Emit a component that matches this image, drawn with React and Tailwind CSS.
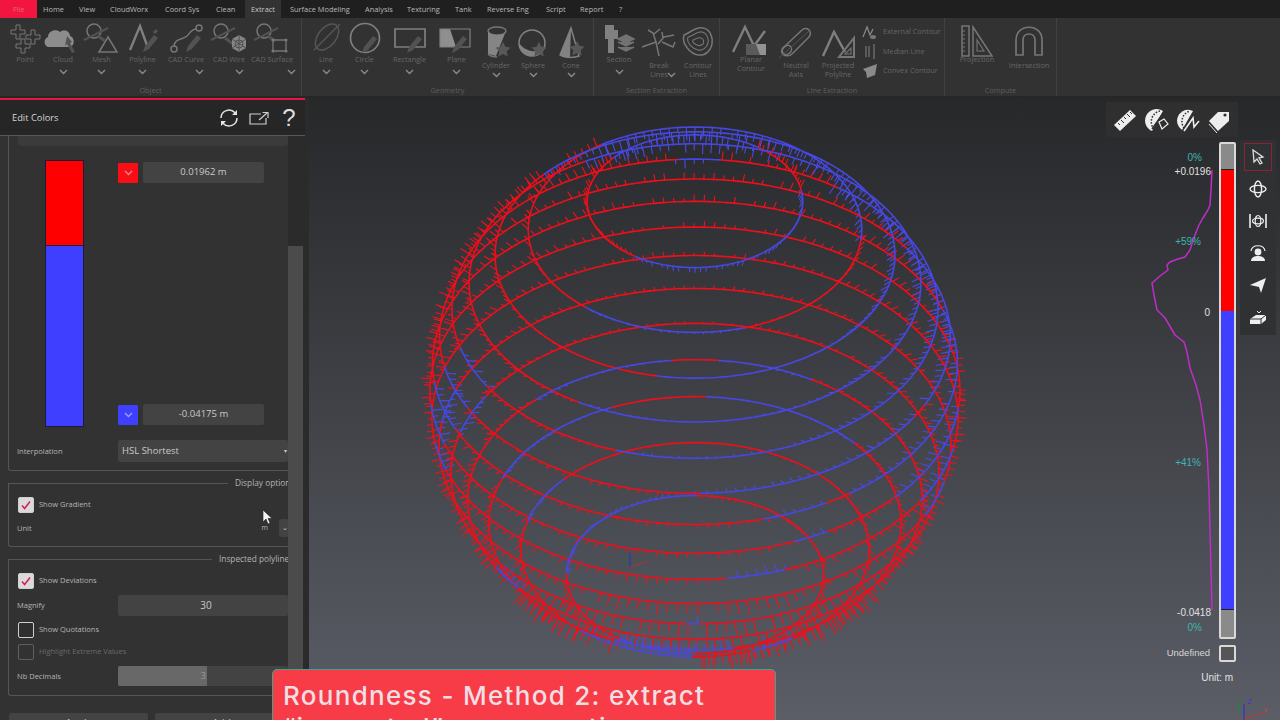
import React from "react";

const S = "#767676";
const D = "#525252";

const Pen = ({ x, y, c = D }) => (
  <path d={`M${x} ${y}l2-6 9-11 4 3-9 11z`} fill={c} stroke="none" />
);
const Star = ({ x, y, r = 8, c = "#585858" }) => {
  const p = [];
  for (let i = 0; i < 10; i++) {
    const a = -Math.PI / 2 + (i * Math.PI) / 5;
    const q = i % 2 ? r * 0.5 : r;
    p.push(`${(x + q * Math.cos(a)).toFixed(1)},${(y + q * Math.sin(a)).toFixed(1)}`);
  }
  return <polygon points={p.join(" ")} fill={c} stroke="none" />;
};
const Ic = ({ w = 40, h = 36, children }) => (
  <svg width={w} height={h} viewBox={`0 0 ${w} ${h}`} fill="none" stroke={S} strokeWidth="1.5" className="shrink-0">
    {children}
  </svg>
);
const Plus = ({ x, y }) => (
  <path d={`M${x - 2} ${y - 7}h4v5h5v4h-5v5h-4v-5h-5v-4h5z`} strokeWidth="1" />
);
const Lens = () => (
  <g>
    <circle cx="12" cy="9" r="7" />
    <path d="M2 18L26 6" stroke={D} strokeWidth="2" />
  </g>
);

const icons = {
  point: (
    <Ic>
      <Plus x={13} y={10} />
      <Plus x={28} y={15} />
      <Plus x={18} y={24} />
    </Ic>
  ),
  cloud: (
    <Ic>
      <path d="M5 25c-4-1-5-8 0-10 0-6 8-9 12-5 4-3 10-1 10 4 5 1 5 10 0 11z" fill="#8c8c8c" stroke="none" />
      <path d="M24 14l5 6-2 1 5 9-3 1-5-9-2 2z" fill={D} stroke="none" />
    </Ic>
  ),
  mesh: (
    <Ic>
      <Lens />
      <path d="M17 30l9-15 9 15z" />
      <path d="M16 14l7 5" stroke={D} strokeWidth="3" />
    </Ic>
  ),
  polyline: (
    <Ic>
      <path d="M7 28L17 4l8 22" strokeWidth="2.4" stroke="#7f7f7f" />
      <Pen x={20} y={30} />
      <path d="M31 11l3-3" stroke={D} strokeWidth="3" />
    </Ic>
  ),
  cadcurve: (
    <Ic>
      <circle cx="8" cy="27" r="3" />
      <circle cx="33" cy="6" r="3" />
      <path d="M8 24c1-8 9-6 13-10 3-3 4-7 10-7" />
      <Pen x={20} y={30} />
    </Ic>
  ),
  cadwire: (
    <Ic>
      <Lens />
      <path d="M16 16l8 6" stroke={D} strokeWidth="3" />
      <path d="M23 17l7-4 7 4v9l-7 4-7-4z" fill="#858585" stroke="none" />
      <path d="M23 17l14 9M37 17l-14 9M30 13v17" stroke="#444" strokeWidth=".8" />
      <circle cx="30" cy="22" r="4" stroke="#444" strokeWidth=".8" />
    </Ic>
  ),
  cadsurface: (
    <Ic>
      <Lens />
      <path d="M16 14l7 5" stroke={D} strokeWidth="3" />
      <path d="M21 18h13v11H21z" strokeWidth="1.3" />
      <g fill="#777" stroke="none">
        <circle cx="21" cy="18" r="1.6" />
        <circle cx="34" cy="18" r="1.6" />
        <circle cx="21" cy="29" r="1.6" />
        <circle cx="34" cy="29" r="1.6" />
      </g>
    </Ic>
  ),
  line: (
    <Ic>
      <ellipse cx="21" cy="15" rx="9" ry="15" transform="rotate(38 21 15)" stroke="#555" />
      <path d="M8 28L34 2" stroke="#555" />
    </Ic>
  ),
  circle: (
    <Ic>
      <circle cx="20" cy="16" r="14.500" strokeWidth="1.7" stroke="#7f7f7f" />
      <Pen x={17} y={31} />
    </Ic>
  ),
  rect: (
    <Ic>
      <path d="M5 7h30v18H5z" strokeWidth="1.7" stroke="#7f7f7f" />
      <Pen x={17} y={31} />
    </Ic>
  ),
  plane: (
    <Ic>
      <path d="M3 7h10l6 18H3z" fill="#8f8f8f" stroke="none" />
      <path d="M3 7h30v18H3z" strokeWidth="1.2" stroke="#808080" />
      <Pen x={15} y={31} />
    </Ic>
  ),
  cylinder: (
    <Ic h={42}>
      <ellipse cx="21" cy="9" rx="9" ry="4" />
      <path d="M12 9v23l8 2 10-25c0 3-5 4-9 4-5 0-9-2-9-4z" fill="#858585" stroke="none" />
      <path d="M12 32c2 2 6 3 9 3" />
      <Star x={27} y={28} r={8} />
    </Ic>
  ),
  sphere: (
    <Ic h={42}>
      <circle cx="19" cy="21" r="13" stroke="#828282" />
      <path d="M6 21c0 8 6 13 13 13 6 0 10-2 12-8-5 5-18 5-25-5z" fill="#828282" stroke="none" />
      <Star x={26} y={28} r={8} />
    </Ic>
  ),
  cone: (
    <Ic h={42}>
      <path d="M20 6L9 33c4 3 14 3 19 1z" stroke="#828282" />
      <path d="M20 6L9 33c3 2 7 3 10 3z" fill="#828282" stroke="none" />
      <Star x={26} y={27} r={8} />
    </Ic>
  ),
  section: (
    <Ic>
      <path d="M6 3h9v5h4v9h-4v14h-6V17H6z" fill="#808080" stroke="none" />
      <path d="M27 13l8 4-8 4-8-4zM19 20l8 4 8-4M19 25l8 4 8-4" fill="#727272" stroke="#727272" strokeWidth="1.5" />
    </Ic>
  ),
  breaks: (
    <Ic h={42}>
      <path d="M20 34l-3-14-14 5M17 20l-3-9-5-3M15 12l6-5M19 22l6-7 10-2M24 16l-1-6M23 20l11 5 2-5" />
    </Ic>
  ),
  contour: (
    <Ic h={42}>
      <path d="M6 13c6-2 12-9 19-7 7 1 10 9 9 16-1 6-6 12-14 11C13 32 3 22 6 13z" />
      <path d="M10 15c5-1 9-6 14-5 5 1 7 7 6 11-1 4-5 8-10 7-5-1-12-7-10-13z" strokeWidth="1.1" />
      <path d="M15 18c3-1 5-3 8-2 3 1 3 4 2 6-2 2-4 2-6 1-3-1-5-3-4-5z" strokeWidth="1.1" />
    </Ic>
  ),
  planar: (
    <Ic w={46}>
      <path d="M5 30L17 5l9 19 11-15" strokeWidth="2.4" stroke="#7f7f7f" />
      <path d="M18 22h14v11H18z" fill="#5a5a5a" stroke="none" />
      <path d="M28 22h10v11H32z" fill="#929292" stroke="none" />
    </Ic>
  ),
  neutral: (
    <Ic h={42}>
      <path d="M8 25L26 8c3-3 8-1 8 2 1 2 0 4-2 6L16 32c-3 3-8 2-10-1-1-2 0-5 2-6z" />
      <ellipse cx="11" cy="28" rx="4" ry="5" transform="rotate(45 11 28)" />
      <path d="M3 36L34 8" stroke="#555" strokeWidth="1" />
    </Ic>
  ),
  projected: (
    <Ic h={42}>
      <path d="M5 34L16 10l11 20" strokeWidth="2.4" stroke="#7f7f7f" />
      <path d="M36 16v19H21z" strokeWidth="2" />
      <path d="M33 26v6h-6z" strokeWidth="1.1" />
    </Ic>
  ),
  projection: (
    <Ic w={44} h={34}>
      <path d="M7 2h7v30H7z" />
      <path d="M7 7h3M7 11h3M7 15h3M7 19h3M7 23h3M7 27h3" strokeWidth="1" />
      <path d="M18 3l19 29H18z" />
      <path d="M22 16l7 11h-7z" strokeWidth="1.1" />
    </Ic>
  ),
  intersection: (
    <Ic w={44} h={40}>
      <path d="M9 31V16c0-17 26-17 26 0v15h-7V16c0-8-12-8-12 0v15z" strokeWidth="1.7" />
    </Ic>
  ),
};

const Chev = ({ color = "#8a8a8a" }) => (
  <svg width="9" height="6" viewBox="0 0 9 6" fill="none" stroke={color} strokeWidth="1.4" className="shrink-0">
    <path d="M1 1l3.5 3.5L8 1" />
  </svg>
);

const RibItem = ({ w, icon, label, chev, chevOff = 0, top = 4, chevMt = 5, inlineChev }) => (
  <div className="flex flex-col items-center shrink-0" style={{ width: w, paddingTop: top }}>
    {icons[icon]}
    <div className="text-[7.3px] leading-[9px] text-[#666] text-center whitespace-pre -mt-[3px]">{label}</div>
    {inlineChev && (
      <div className="-mt-[7px] ml-[24px]">
        <Chev />
      </div>
    )}
    {chev && (
      <div style={{ marginLeft: chevOff, marginTop: chevMt }}>
        <Chev />
      </div>
    )}
  </div>
);

const Group = ({ w, title, children, sep = true, pl = 0 }) => (
  <div className={`flex flex-col shrink-0 h-full ${sep ? "border-r border-[#414141]" : ""}`} style={{ width: w }}>
    <div className="flex h-[67px]" style={{ paddingLeft: pl }}>
      {children}
    </div>
    <div className="text-[7.3px] leading-[10px] text-center text-[#5e5e5e]">{title}</div>
  </div>
);

const menu = [
  ["Home", 36],
  ["View", 31],
  ["CloudWorx", 55],
  ["Coord Sys", 51],
  ["Clean", 35],
  ["Extract", 36, true],
  ["Surface Modeling", 75],
  ["Analysis", 42],
  ["Texturing", 48],
  ["Tank", 32],
  ["Reverse Eng", 59],
  ["Script", 34],
  ["Report", 39],
  ["?", 14],
];

const Small = ({ label, children }) => (
  <div className="flex items-center h-[19.5px]">
    <div className="w-[20px] flex justify-center">{children}</div>
    <span className="text-[7.3px] text-[#666] ml-[3px] whitespace-nowrap">{label}</span>
  </div>
);

const Check = ({ on, dim }) => (
  <div
    className={`w-[16px] h-[16px] rounded-[2px] flex items-center justify-center shrink-0 border ${
      on ? "bg-[#dcd9da] border-[#cfcfcf]" : dim ? "bg-transparent border-[#5f5f5f]" : "bg-[#2f2f2f] border-[#cfcfcf]"
    }`}
  >
    {on && (
      <svg width="12" height="12" viewBox="0 0 12 12" fill="none" stroke="#d41f52" strokeWidth="1.5">
        <path d="M2 6.5l2.6 3L10 2.5" />
      </svg>
    )}
  </div>
);

const CheckRow = ({ on, dim, label }) => (
  <div className="flex items-center h-[15px] pl-[9px]">
    <Check on={on} dim={dim} />
    <span className={`ml-[5px] text-[7.5px] whitespace-nowrap ${dim ? "text-[#6a6a6a]" : "text-[#b4b4b4]"}`}>{label}</span>
  </div>
);

const Field = ({ children, className = "" }) => (
  <div className={`bg-[#434343] rounded-[2px] flex items-center text-[#c9c9c9] ${className}`}>{children}</div>
);

const Legend = ({ w, title }) => (
  <div className="flex items-center h-px">
    <div className="h-px bg-[#555] shrink-0" style={{ width: w }} />
    <span className="ml-[7px] text-[8.3px] text-[#b5b5b5] whitespace-nowrap">{title}</span>
  </div>
);

/* Wireframe sphere: circles of latitude projected orthographically, with deviation whiskers */
const C = { x: 695, y: 392, R: 265, t: (38 * Math.PI) / 180 };
const rings = [
  [66, [[-123, 10], [55, 140]]],
  [51, [[-130, -72], [-5, 125]]],
  [41, [[-100, 140]]],
  [31.5, [[-120, 120]]],
  [23.5, [[-108, 55], [85, 95], [196, 212]]],
  [15.5, [[-88, -30], [-25, 35], [192, 208]]],
  [8, [[-74, -59], [-53, 20], [188, 205]]],
  [0.5, [[-67, -59], [-40, -5], [186, 200]]],
  [-7, [[-82, -69], [-30, -10], [190, 200]]],
  [-15, [[-25, -12], [160, 172]]],
  [-23, [[-91, -88], [150, 165]]],
  [-31, [[60, 85], [97, 135], [-150, -140]]],
  [-39, [[40, 88], [115, 160], [-112, -78]]],
  [-49, [[140, 165], [-130, -90], [-70, -55]]],
  [-61, [[90, 180], [-125, -90]]],
];
const norm = (a) => ((a % 360) + 360) % 360;
const isBlue = (ranges, a) =>
  ranges.some(([s, e]) => {
    const n = norm(a - s);
    return n <= norm(e - s);
  });
const pt = (phi, th) => {
  const p = (phi * Math.PI) / 180;
  const q = (th * Math.PI) / 180;
  return [
    C.x + C.R * Math.cos(p) * Math.cos(q),
    C.y - C.R * Math.sin(p) * Math.cos(C.t) - C.R * Math.cos(p) * Math.sin(C.t) * Math.sin(q),
  ];
};
const rnd = (a, b) => {
  const v = Math.sin(a * 12.9898 + b * 78.233) * 43758.5453;
  return v - Math.floor(v);
};

const Sphere = () => {
  const paths = { r: "", b: "" };
  const tick = { r: "", b: "" };
  rings.forEach(([phi, ranges]) => {
    let prev = null;
    for (let a = 0; a <= 360; a += 1) {
      const [x, y] = pt(phi, a);
      const k = isBlue(ranges, a + 0.5) ? "b" : "r";
      if (prev) paths[k] += `M${prev[0].toFixed(1)} ${prev[1].toFixed(1)}L${x.toFixed(1)} ${y.toFixed(1)}`;
      prev = [x, y];
    }
    const step = Math.abs(phi) > 45 ? 3 : 2.2;
    for (let a = 0; a < 360; a += step) {
      const [x, y] = pt(phi, a);
      const k = isBlue(ranges, a) ? "b" : "r";
      const r = rnd(phi, a);
      if (r < 0.08) continue;
      const d =
        k === "b"
          ? -(0.016 + 0.026 * r)
          : y > 590
          ? 0.035 + 0.03 * r
          : 0.014 + 0.024 * r;
      const x2 = x + (x - C.x) * d;
      const y2 = y + (y - C.y) * d;
      tick[k] += `M${x.toFixed(1)} ${y.toFixed(1)}L${x2.toFixed(1)} ${y2.toFixed(1)}`;
    }
  });
  return (
    <g fill="none">
      <path d={tick.r} stroke="#f2101c" strokeWidth="1.1" />
      <path d={tick.b} stroke="#4a4ae4" strokeWidth="1.1" />
      <path d={paths.r} stroke="#ee0f1a" strokeWidth="1.6" />
      <path d={paths.b} stroke="#4747e2" strokeWidth="1.6" />
    </g>
  );
};

const curve =
  "M1212 170L1211 190L1210 205L1208 210L1203 218L1199 225L1195 235L1190 250L1185 257L1178 259L1170 262L1167 265L1168 270L1160 276L1152 283L1154 295L1157 310L1165 318L1168 323L1175 335L1184 342L1187 352L1190 368L1196 385L1200 400L1204 425L1207 450L1209 490L1210 530L1212 610";

const ToolBtn = ({ children, active }) => (
  <div className={`w-[28px] h-[28px] flex items-center justify-center ${active ? "border border-[#8a2238]" : ""}`}>{children}</div>
);

export default function App() {
  return (
    <div className="w-[1280px] h-[720px] relative overflow-hidden flex flex-col bg-[#262626]" style={{ fontFamily: '"Open Sans","Noto Sans",sans-serif' }}>
      {/* menu */}
      <div className="h-[18px] flex bg-[#1f1f1f] text-[#b8b8b8] text-[7.4px] leading-[18px] shrink-0">
        <div className="w-[37px] bg-[#f2153f] text-[#e8647e] pl-[13px]">File</div>
        {menu.map(([t, w, active]) => (
          <div key={t} className={`pl-[6px] whitespace-nowrap ${active ? "bg-[#333] text-[#c8c8c8]" : ""}`} style={{ width: w, marginRight: active ? 3 : 0 }}>
            {t}
          </div>
        ))}
      </div>
      {/* ribbon */}
      <div className="h-[78px] flex bg-[#323232] shrink-0">
        <Group w={302} title="Object" pl={6}>
          <RibItem w={38} icon="point" label="Point" />
          <RibItem w={38} icon="cloud" label="Cloud" chev />
          <RibItem w={39} icon="mesh" label="Mesh" chev />
          <RibItem w={43} icon="polyline" label="Polyline" chev />
          <RibItem w={44} icon="cadcurve" label="CAD Curve" chev chevOff={26} />
          <RibItem w={42} icon="cadwire" label="CAD Wire" chev chevOff={20} />
          <RibItem w={44} icon="cadsurface" label="CAD Surface" chev chevOff={38} />
        </Group>
        <Group w={292} title="Geometry" pl={5}>
          <RibItem w={38} icon="line" label="Line" chev />
          <RibItem w={39} icon="circle" label="Circle" chev />
          <RibItem w={51} icon="rect" label="Rectangle" chev />
          <RibItem w={43} icon="plane" label="Plane" chev />
          <RibItem w={36} icon="cylinder" label="Cylinder" chev chevMt={2} />
          <RibItem w={38} icon="sphere" label="Sphere" chev chevMt={2} />
          <RibItem w={38} icon="cone" label="Cone" chev chevMt={2} />
        </Group>
        <Group w={126} title="Section Extraction" pl={6}>
          <RibItem w={38} icon="section" label="Section" chev />
          <RibItem w={42} icon="breaks" label={"Break\nLines"} inlineChev />
          <RibItem w={36} icon="contour" label={"Contour\nLines"} />
        </Group>
        <Group w={225} title="Line Extraction" pl={8}>
          <RibItem w={46} icon="planar" label={"Planar\nContour"} />
          <RibItem w={44} icon="neutral" label={"Neutral\nAxis"} />
          <RibItem w={40} icon="projected" label={"Projected\nPolyline"} />
          <div className="flex flex-col pt-[4px] pl-[2px]">
            <Small label="External Contour">
              <svg width="16" height="16" viewBox="0 0 16 16" fill="none" stroke="#8a8a8a" strokeWidth="1.2">
                <path d="M1 13L5 3l3 8 3-6" />
                <ellipse cx="11" cy="13" rx="3" ry="2" fill="#777" stroke="none" />
              </svg>
            </Small>
            <Small label="Median Line">
              <svg width="14" height="16" viewBox="0 0 14 16" fill="none" stroke="#777" strokeWidth="1.2">
                <path d="M3 3v11M6 3v11M11 1v15" />
              </svg>
            </Small>
            <Small label="Convex Contour">
              <svg width="16" height="16" viewBox="0 0 16 16" fill="#8a8a8a">
                <path d="M1 6l14-5-2 11-8 3-1-6z" />
              </svg>
            </Small>
          </div>
        </Group>
        <Group w={112} title="Compute" pl={10}>
          <RibItem w={44} icon="projection" label="Projection" top={6} />
          <div className="w-[4px]" />
          <RibItem w={52} icon="intersection" label="Intersection" top={6} />
        </Group>
      </div>
      {/* main */}
      <div className="flex-1 flex min-h-0 pt-[2px]">
        <aside className="w-[305px] shrink-0 flex flex-col border-t-2 border-[#e3173f] bg-[#323232] min-h-0">
          <div className="h-[36px] shrink-0 bg-[#262626] border-b border-[#585858] flex items-center pl-[12px] text-[#d4d4d4] text-[9.3px]">
            <span className="flex-1">Edit Colors</span>
            <svg width="20" height="20" viewBox="0 0 20 20" fill="none" stroke="#e4e4e4" strokeWidth="1.5">
              <path d="M2 10a8 8 0 0 1 14-5.2M18 10a8 8 0 0 1-14 5.2" />
              <path d="M18 2v5h-5zM2 18v-5h5z" fill="#e4e4e4" stroke="none" />
            </svg>
            <svg width="20" height="14" viewBox="0 0 20 14" fill="none" stroke="#cfcfcf" strokeWidth="1.2" className="ml-[10px]">
              <path d="M12 3H1v10h16V7" />
              <path d="M10 9l8-7M13.5 1.5H19V7" />
            </svg>
            <span className="w-[20px] ml-[10px] mr-[6px] text-center text-[24px] leading-none text-[#dedede]" style={{ fontFamily: '"Liberation Sans",sans-serif' }}>
              ?
            </span>
          </div>
          <div className="flex-1 flex min-h-0">
            <div className="w-[8px] shrink-0" />
            <div className="w-[280px] shrink-0 overflow-hidden">
              <div className="border-l border-b border-[#555] rounded-bl-[3px] h-[335px]">
                <div className="ml-[9px] h-[10px] bg-[#3b3b3b] rounded-b-[3px]" />
                <div className="flex pl-[36px] pt-[14px]">
                  <div className="w-[39px] h-[267px] flex flex-col border border-[#1c1c3a] shrink-0">
                    <div className="h-[85px] bg-[#ff0000] border-b border-[#222]" />
                    <div className="flex-1 bg-[#3f3fff]" />
                  </div>
                  <div className="ml-[34px] flex flex-col justify-between py-[2px] h-[267px]">
                    <div className="flex items-center">
                      <div className="w-[20px] h-[20px] bg-[#fa0d14] rounded-[1px] flex items-center justify-center">
                        <Chev color="#f08a8a" />
                      </div>
                      <Field className="ml-[5px] w-[121px] h-[21px] justify-center text-[9.5px]">0.01962 m</Field>
                    </div>
                    <div className="flex items-center">
                      <div className="w-[20px] h-[20px] bg-[#3f3fff] rounded-[1px] flex items-center justify-center">
                        <Chev color="#9a9aff" />
                      </div>
                      <Field className="ml-[5px] w-[121px] h-[21px] justify-center text-[9.5px]">-0.04175 m</Field>
                    </div>
                  </div>
                </div>
                <div className="flex items-center pl-[8px] mt-[13px]">
                  <span className="w-[101px] pt-px text-[7.5px] text-[#b4b4b4]">Interpolation</span>
                  <Field className="w-[170px] h-[22px] pl-[4px] pr-[1px] text-[9.5px] justify-between">
                    <span>HSL Shortest</span>
                    <span className="text-[6px]">▾</span>
                  </Field>
                </div>
              </div>
              <div className="mt-[12px] border-l border-b border-[#555] rounded-bl-[3px] pb-[9px]">
                <Legend w={219} title="Display options" />
                <div className="mt-[13px]">
                  <CheckRow on label="Show Gradient" />
                </div>
                <div className="flex items-center pl-[8px] mt-[7px] h-[18px]">
                  <span className="w-[250px] pt-px text-[7.5px] text-[#b4b4b4]">Unit</span>
                  <span className="w-[18px] pt-px text-[7px] text-[#b4b4b4]">m</span>
                  <Field className="flex-1 h-[18px] pl-[3px] text-[7px]">⌄</Field>
                </div>
              </div>
              <div className="mt-[12px] border-l border-b border-[#555] rounded-bl-[3px] pb-[9px]">
                <Legend w={203} title="Inspected polylines" />
                <div className="mt-[13px]">
                  <CheckRow on label="Show Deviations" />
                </div>
                <div className="flex items-center pl-[8px] mt-[7px]">
                  <span className="w-[101px] text-[7.5px] text-[#b4b4b4]">Magnify</span>
                  <Field className="w-[170px] h-[21px] justify-center pl-[6px] text-[10px]">30</Field>
                </div>
                <div className="mt-[6px]">
                  <CheckRow label="Show Quotations" />
                </div>
                <div className="mt-[7px]">
                  <CheckRow dim label="Highlight Extreme Values" />
                </div>
                <div className="flex items-center pl-[8px] mt-[7px]">
                  <span className="w-[101px] pt-px text-[7.5px] text-[#b4b4b4]">Nb Decimals</span>
                  <div className="w-[170px] h-[20px] bg-[#434343] rounded-[2px] flex">
                    <div className="w-[89px] h-full bg-[#686868] rounded-l-[2px] flex items-center justify-end text-[9px] text-[#9a9a9a] pr-px">3</div>
                  </div>
                </div>
              </div>
              <div className="mt-[17px] flex pl-[1px] text-[10px] text-[#cfcfcf] text-center">
                <div className="w-[139px] h-[30px] bg-[#434343] rounded-[2px] pt-[3px]">Apply</div>
                <div className="ml-[7px] w-[133px] h-[30px] bg-[#434343] rounded-[2px] pt-[3px]">Add</div>
              </div>
            </div>
            <div className="w-[15px] shrink-0 flex flex-col bg-[#2b2b2b]">
              <div className="h-[110px]" />
              <div className="flex-1 bg-[#4b4b4b]" />
            </div>
            <div className="w-[2px] shrink-0 bg-[#2b2b2b]" />
          </div>
        </aside>
        <div className="w-[4px] shrink-0 bg-[#2b2b2b]" />
        <div className="flex-1 relative bg-gradient-to-b from-[#27282a] to-[#5b5e67] min-w-0 overflow-hidden">
          <svg viewBox="309 98 971 622" className="absolute inset-0 w-full h-full">
            <Sphere />
            <path d={curve} fill="none" stroke="#c02cc8" strokeWidth="1.5" />
            <g fill="none" strokeWidth="1">
              <path d="M630 553v14" stroke="#2a2ad0" />
              <path d="M630 567l19-6" stroke="#a33" />
              <path d="M627 555v10" stroke="#2f6b3a" />
              <path d="M1244 704v16" stroke="#2a2ad0" />
              <path d="M1244 719l20-6" stroke="#d03030" />
              <path d="M1239 702v10" stroke="#2f7a4a" strokeWidth="2" />
            </g>
            <text x="1247" y="704" fontSize="8" fill="#3a3ae0">Z</text>
            <text x="1263" y="713" fontSize="8" fill="#c84040">X</text>
          </svg>
          {/* view toolbar */}
          <div className="absolute top-[4px] right-[42px] w-[132px] h-[35px] bg-[#2f2f2f] flex items-center justify-around px-[3px]">
            <svg width="26" height="26" viewBox="0 0 26 26" fill="#eee">
              <path d="M2 18L18 3l6 6L8 24z" />
              <path d="M6 16l2 2M9 13l3 3M12 10l2 2M15 7l3 3M18 5l2 2" stroke="#2f2f2f" strokeWidth="1" />
            </svg>
            <svg width="26" height="26" viewBox="0 0 26 26" fill="none">
              <path d="M9 24A11 11 0 0 1 18 3l2 1z" fill="#eee" />
              <path d="M10 22A11 11 0 0 1 16 4" stroke="#2f2f2f" strokeWidth="1.5" strokeDasharray="1.5 1.5" transform="translate(1 0)" />
              <path d="M9 22l12-17" stroke="#2f2f2f" strokeWidth="1.5" />
              <path d="M16 15l5-3 4 5-6 5z" stroke="#eee" strokeWidth="1.2" />
            </svg>
            <svg width="26" height="26" viewBox="0 0 26 26" fill="none">
              <path d="M7 23A11 11 0 0 1 15 3l3 1z" fill="#eee" />
              <path d="M8 21A11 11 0 0 1 14 4" stroke="#2f2f2f" strokeWidth="1.5" strokeDasharray="1.5 1.5" transform="translate(1 0)" />
              <path d="M9 24l9-13 1 9 5-6" stroke="#eee" strokeWidth="1.6" />
            </svg>
            <svg width="26" height="26" viewBox="0 0 26 26" fill="none">
              <path d="M12 5h11v9L12 24 3 14z" fill="#eee" />
              <path d="M3 17l8 9" stroke="#eee" strokeWidth="1" />
              <circle cx="19" cy="8" r="1.6" fill="#2f2f2f" />
            </svg>
          </div>
          {/* right tools */}
          <div className="absolute top-[42px] right-[4px] w-[36px] h-[195px] bg-[#303133] flex flex-col items-center pt-[3px] gap-[4px]">
            <ToolBtn active>
              <svg width="16" height="16" viewBox="0 0 16 16" fill="#3a3b3d" stroke="#ddd" strokeWidth="1.3">
                <path d="M3 1l10 7-4 1 3 5-2 1-3-5-3 3z" />
              </svg>
            </ToolBtn>
            <ToolBtn>
              <svg width="18" height="18" viewBox="0 0 18 18" fill="none" stroke="#eee" strokeWidth="1.4">
                <ellipse cx="9" cy="9" rx="8" ry="3.6" />
                <ellipse cx="9" cy="9" rx="3.6" ry="8" />
              </svg>
            </ToolBtn>
            <ToolBtn>
              <svg width="18" height="18" viewBox="0 0 18 18" fill="none" stroke="#eee" strokeWidth="1.2">
                <path d="M1 2v14M17 2v14" strokeWidth="1.6" />
                <ellipse cx="9" cy="9" rx="5.500" ry="2.800" />
                <ellipse cx="9" cy="9" rx="2.800" ry="5.500" />
              </svg>
            </ToolBtn>
            <ToolBtn>
              <svg width="18" height="18" viewBox="0 0 18 18" fill="#eee">
                <circle cx="9" cy="8" r="3.4" />
                <path d="M2 17c0-4 4-5 7-5s7 1 7 5z" />
                <path d="M2 7c1-7 13-7 14 0" fill="none" stroke="#eee" strokeWidth="1.2" />
              </svg>
            </ToolBtn>
            <ToolBtn>
              <svg width="18" height="18" viewBox="0 0 18 18" fill="#eee">
                <path d="M1 9L17 2l-5 15-2-6z" />
              </svg>
            </ToolBtn>
            <ToolBtn>
              <svg width="18" height="18" viewBox="0 0 18 18" fill="none">
                <path d="M1 11l6-4h10v5l-5 4H1z" fill="#eee" />
                <path d="M1 11h11l5-4M12 11v5" stroke="#303133" strokeWidth="1" />
                <path d="M8 3l2 2 2-2" stroke="#eee" strokeWidth="1" />
              </svg>
            </ToolBtn>
          </div>
          {/* colour scale */}
          <div className="absolute top-[44px] right-[44px] w-[17px] h-[497px] border-2 border-[#d8d8d8] rounded-[2px] flex flex-col overflow-hidden">
            <div className="h-[26px] bg-[#8a8a8a] border-b border-[#222]" />
            <div className="h-[141px] bg-[#ff0000]" />
            <div className="h-[299px] bg-[#3f3fff] border-b border-[#222]" />
            <div className="flex-1 bg-[#8a8a8a]" />
          </div>
          <div className="absolute top-[547px] right-[44px] flex items-center">
            <span className="text-[9.5px] text-[#d6d6d6] mr-[9px]" style={{ fontFamily: '"Liberation Sans",sans-serif' }}>Undefined</span>
            <div className="w-[17px] h-[17px] border-2 border-[#d8d8d8] rounded-[2px] bg-[#555]" />
          </div>
          <div className="absolute inset-0 text-[10px] text-[#e0e0e0] pointer-events-none" style={{ fontFamily: '"Liberation Sans",sans-serif' }}>
            <span className="absolute top-[52px] right-[78px] text-[#3db5b0]">0%</span>
            <span className="absolute top-[66px] right-[69px]">+0.0196</span>
            <span className="absolute top-[136px] right-[79px] text-[#3db5b0]">+59%</span>
            <span className="absolute top-[207px] right-[70px]">0</span>
            <span className="absolute top-[357px] right-[79px] text-[#3db5b0]">+41%</span>
            <span className="absolute top-[507px] right-[69px]">-0.0418</span>
            <span className="absolute top-[522px] right-[78px] text-[#3db5b0]">0%</span>
            <span className="absolute top-[572px] right-[47px]">Unit: m</span>
          </div>
        </div>
      </div>
      {/* cursor */}
      <svg width="12" height="16" viewBox="0 0 12 16" className="absolute left-[262px] top-[509px]" fill="#f4f4f4" stroke="#222" strokeWidth=".6">
        <path d="M1 1v12l3-3 2 5 2-1-2-4.500h4z" />
      </svg>
      {/* caption */}
      <div className="absolute left-[272px] top-[669px] w-[504px] h-[60px] bg-[#f73c47] border border-[#3fa68d] rounded-[5px] text-[#efdfe3] text-[26px] font-medium leading-[32px] tracking-[1.3px] pl-[10px] pt-[10px]" style={{ fontFamily: 'Inter,sans-serif' }}>
        <div className="whitespace-nowrap">Roundness - Method 2: extract</div>
        <div className="whitespace-nowrap">“inspected” cross-section</div>
      </div>
    </div>
  );
}
